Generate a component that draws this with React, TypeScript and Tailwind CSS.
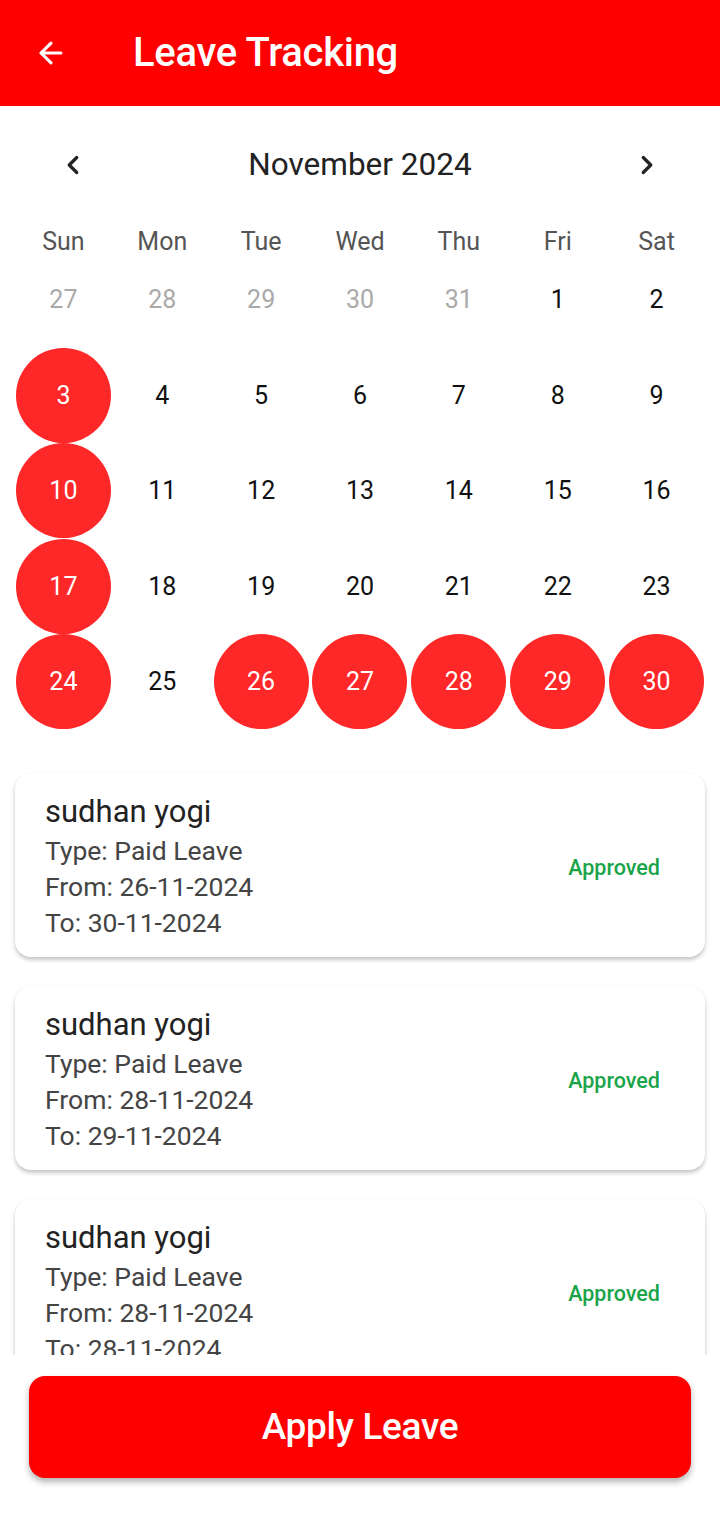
import { ArrowLeft, ChevronLeft, ChevronRight } from "lucide-react";

const weekdays = ["Sun", "Mon", "Tue", "Wed", "Thu", "Fri", "Sat"];

const leaveDays = [3, 10, 17, 24, 26, 27, 28, 29, 30];

const weeks: { day: number; outside?: boolean }[][] = [
  [
    { day: 27, outside: true },
    { day: 28, outside: true },
    { day: 29, outside: true },
    { day: 30, outside: true },
    { day: 31, outside: true },
    { day: 1 },
    { day: 2 },
  ],
  [3, 4, 5, 6, 7, 8, 9].map((day) => ({ day })),
  [10, 11, 12, 13, 14, 15, 16].map((day) => ({ day })),
  [17, 18, 19, 20, 21, 22, 23].map((day) => ({ day })),
  [24, 25, 26, 27, 28, 29, 30].map((day) => ({ day })),
];

const leaves = [
  { name: "sudhan yogi", type: "Paid Leave", from: "26-11-2024", to: "30-11-2024", status: "Approved" },
  { name: "sudhan yogi", type: "Paid Leave", from: "28-11-2024", to: "29-11-2024", status: "Approved" },
  { name: "sudhan yogi", type: "Paid Leave", from: "28-11-2024", to: "28-11-2024", status: "Approved" },
];

function LeaveCard({ leave }: { leave: (typeof leaves)[number] }) {
  return (
    <div className="flex shrink-0 items-center justify-between rounded-[16px] bg-white pb-[16px] pl-[30px] pr-[45px] pt-[17px] shadow-[0_3px_4px_rgba(0,0,0,0.22),0_0_2px_rgba(0,0,0,0.04)]">
      <div className="flex flex-col">
        <div className="text-[31px] leading-[43px] text-[#222]">{leave.name}</div>
        <div className="text-[26.5px] leading-[36px] text-[#444]">Type: {leave.type}</div>
        <div className="text-[26.5px] leading-[36px] text-[#444]">From: {leave.from}</div>
        <div className="text-[26.5px] leading-[36px] text-[#444]">To: {leave.to}</div>
      </div>
      <div className="mt-[6px] text-[21.5px] font-medium text-[#1aa44a]">{leave.status}</div>
    </div>
  );
}

export default function App() {
  return (
    <div
      className="flex h-[1514px] w-[720px] flex-col overflow-hidden bg-white"
      style={{ fontFamily: "Roboto, 'Noto Sans', sans-serif" }}
    >
      {/* Header */}
      <header className="flex h-[106px] shrink-0 items-center bg-[#ff0000] pl-[34px]">
        <ArrowLeft className="h-[34px] w-[34px] text-white" strokeWidth={2.2} />
        <h1 className="ml-[65px] text-[40px] font-medium tracking-[-0.3px] text-white">Leave Tracking</h1>
      </header>

      {/* Calendar */}
      <section className="shrink-0 px-[14px]">
        <div className="mt-[31px] flex h-[56px] items-center justify-between px-[44px]">
          <ChevronLeft className="h-[30px] w-[30px] text-[#222]" strokeWidth={2.6} />
          <div className="text-[31.5px] text-[#222]">November 2024</div>
          <ChevronRight className="h-[30px] w-[30px] text-[#222]" strokeWidth={2.6} />
        </div>

        <div className="mt-[39px] grid h-[20px] grid-cols-7">
          {weekdays.map((d) => (
            <div key={d} className="flex items-center justify-center text-[25px] leading-[20px] text-[#555]">
              {d}
            </div>
          ))}
        </div>

        <div className="flex flex-col">
          {weeks.map((week, i) => (
            <div key={i} className="grid h-[95.5px] grid-cols-7">
              {week.map((c) => {
                const leave = !c.outside && leaveDays.includes(c.day);
                return (
                  <div key={`${i}-${c.day}`} className="flex items-center justify-center">
                    {leave ? (
                      <div className="flex h-[95px] w-[95px] items-center justify-center rounded-full bg-[#ff2828] text-[25px] text-white">
                        {c.day}
                      </div>
                    ) : (
                      <span className={`text-[25px] ${c.outside ? "text-[#aaa]" : "text-[#111]"}`}>{c.day}</span>
                    )}
                  </div>
                );
              })}
            </div>
          ))}
        </div>
      </section>

      {/* Leave list */}
      <section className="flex min-h-0 flex-1 flex-col gap-[29px] overflow-hidden px-[15px] pt-[43px]">
        {leaves.map((l, i) => (
          <LeaveCard key={i} leave={l} />
        ))}
      </section>

      {/* Apply button */}
      <div className="shrink-0 px-[29px] pb-[36px] pt-[21px]">
        <button className="flex h-[102px] w-full items-center justify-center rounded-[16px] bg-[#ff0000] text-[37px] font-medium tracking-[-0.3px] text-white shadow-[0_4px_6px_rgba(0,0,0,0.3)]">
          Apply Leave
        </button>
      </div>
    </div>
  );
}
